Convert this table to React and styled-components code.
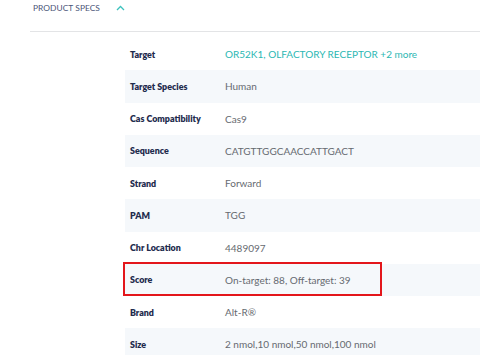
import React from "react";
import styled, { createGlobalStyle } from "styled-components";

const Global = createGlobalStyle`
  html, body { margin: 0; padding: 0; background: #fff; }
  body { font-family: Lato, "Open Sans", sans-serif; width: 480px; height: 355px; overflow: hidden; }
`;

const Page = styled.div`
  width: 480px;
`;

const Header = styled.div`
  margin-left: 30px;
  height: 31px;
  border-bottom: 1px solid #e3e4e6;
  display: flex;
  align-items: flex-start;
  gap: 16px;
  padding-left: 3px;
`;

const HeaderTitle = styled.span`
  font-size: 8.4px;
  line-height: 16px;
  color: #4a5578;
  letter-spacing: 0.05px;
`;

const Chevron = styled.svg`
  margin-top: 4.5px;
  display: block;
`;

const Table = styled.div`
  margin: 6px 0 0 125px;
  display: flex;
  flex-direction: column;
`;

const Row = styled.div`
  position: relative;
  display: grid;
  grid-template-columns: 95px 1fr;
  align-items: center;
  height: 32.25px;
  padding-left: 5px;
  background: ${(p) => (p.$shaded ? "#f5f8fb" : "#fff")};
`;

const Label = styled.span`
  font-size: 8.9px;
  font-weight: 800;
  color: #1e2b4d;
`;

const Value = styled.span`
  font-size: 10px;
  color: ${(p) => (p.$link ? "#2bb7b3" : "#666a70")};
  white-space: nowrap;
`;

const Highlight = styled.div`
  position: absolute;
  left: -2px;
  top: -2px;
  width: 259px;
  height: 34px;
  box-sizing: border-box;
  border: 2px solid #e3161b;
  pointer-events: none;
`;

const specs = [
  ["Target", "OR52K1, OLFACTORY RECEPTOR +2 more", true],
  ["Target Species", "Human"],
  ["Cas Compatibility", "Cas9"],
  ["Sequence", "CATGTTGGCAACCATTGACT"],
  ["Strand", "Forward"],
  ["PAM", "TGG"],
  ["Chr Location", "4489097"],
  ["Score", "On-target: 88, Off-target: 39"],
  ["Brand", "Alt-R®"],
  ["Size", "2 nmol,10 nmol,50 nmol,100 nmol"],
];

export default function App() {
  return (
    <Page>
      <Global />
      <Header>
        <HeaderTitle>PRODUCT SPECS</HeaderTitle>
        <Chevron width="9" height="6" viewBox="0 0 9 6">
          <polyline points="1,5 4.5,1.5 8,5" fill="none" stroke="#3cc2bd" strokeWidth="1.3" />
        </Chevron>
      </Header>
      <Table>
        {specs.map(([label, value, link], i) => (
          <Row key={label} $shaded={i % 2 === 1}>
            <Label>{label}</Label>
            <Value $link={link}>{value}</Value>
            {label === "Score" && <Highlight />}
          </Row>
        ))}
      </Table>
    </Page>
  );
}
